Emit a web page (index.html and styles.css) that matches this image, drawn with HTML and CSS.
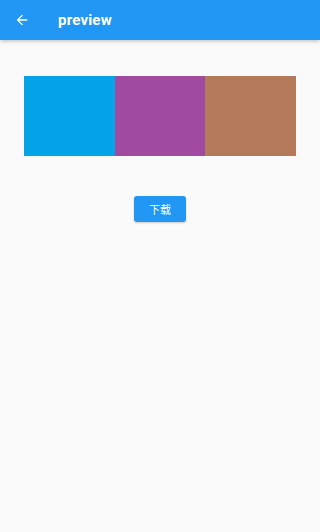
FILE: index.html
```html
<!DOCTYPE html>
<html lang="zh">
<head>
    <meta charset="UTF-8">
    <meta name="viewport" content="width=device-width, initial-scale=1.0">
    <title>preview</title>
    <link rel="stylesheet" href="styles.css">
</head>
<body>
    <header class="app-bar">
        <span class="back">
            <svg width="16" height="16" viewBox="0 0 24 24"><path d="M20 11H7.83l5.59-5.59L12 4l-8 8 8 8 1.41-1.41L7.83 13H20v-2z" fill="#fff"/></svg>
        </span>
        <h1 class="title">preview</h1>
    </header>

    <main class="content">
        <div class="swatches">
            <div class="swatch blue"></div>
            <div class="swatch purple"></div>
            <div class="swatch brown"></div>
        </div>
        <button class="download">下载</button>
    </main>
</body>
</html>
```

FILE: styles.css
```css
html, body { margin: 0; height: 100%; }
body { background: #fafafa; font-family: Roboto, "Noto Sans CJK SC", sans-serif; }
.app-bar { height: 40px; background: #2196f3; display: flex; align-items: center; box-shadow: 0 1px 4px rgba(0,0,0,0.25); }
.back { width: 16px; height: 16px; margin-left: 14px; display: flex; }
.title { margin: 0 0 0 28px; color: #fff; font-size: 15px; font-weight: 700; letter-spacing: 0.2px; }
.content { padding: 36px 24px 0; display: flex; flex-direction: column; align-items: center; }
.swatches { display: flex; width: 100%; height: 80px; }
.swatch { flex: 1; }
.blue { background: #03a3e8; }
.purple { background: #a04aa0; }
.brown { background: #b57a59; }
.download { margin-top: 40px; width: 52px; height: 26px; border: none; border-radius: 3px; background: #2196f3; color: #fff; font-family: "Noto Sans CJK SC", sans-serif; font-size: 11px; padding: 0; box-shadow: 0 1px 2px rgba(0,0,0,0.2); }
```
